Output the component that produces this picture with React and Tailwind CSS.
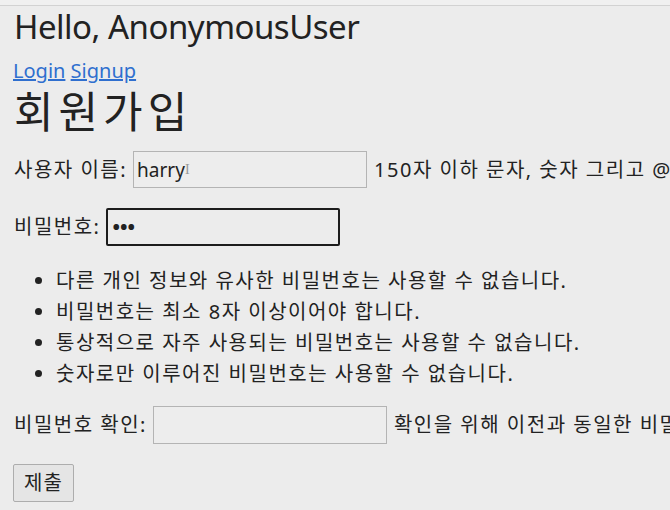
import React from 'react';

const font = { fontFamily: '"Noto Sans", "Noto Sans CJK KR", sans-serif' };

const rules = [
    '다른 개인 정보와 유사한 비밀번호는 사용할 수 없습니다.',
    '비밀번호는 최소 8자 이상이어야 합니다.',
    '통상적으로 자주 사용되는 비밀번호는 사용할 수 없습니다.',
    '숫자로만 이루어진 비밀번호는 사용할 수 없습니다.',
];

const App = () => {
    return (
        <div className="w-[670px] h-[510px] overflow-hidden bg-[#ececec] text-[#222] whitespace-nowrap font-['Noto_Sans','Noto_Sans_CJK_KR',sans-serif]">
            <div className="h-[6px] border-b border-[#d2d2d2] bg-[#f0f0f0]" />

            <h1 className="pl-[14px] text-[33px] leading-[42px] tracking-[-0.5px] font-normal">Hello, AnonymousUser</h1>

            <div className="mt-[11px] pl-[13px] text-[20px] leading-[24px] text-[#2f6fcf]">
                <a href="#" className="underline">Login</a>{' '}
                <a href="#" className="underline">Signup</a>
            </div>

            <h2 className="mt-[4px] pl-[14px] text-[43px] leading-[50px] tracking-[5px] font-normal">회원가입</h2>

            <form className="pl-[14px] text-[20px] tracking-[1.5px]">
                {/* 사용자 이름 */}
                <div className="mt-[14px] flex items-center h-[37px]">
                    <label>사용자 이름:</label>
                    <div className="relative ml-[6px]">
                        <input
                            readOnly
                            defaultValue="harry"
                            style={font}
                            className="w-[234px] h-[37px] border border-[#b4b4b4] bg-[#ededed] px-[3px] text-[19px] tracking-normal text-[#222] outline-none"
                        />
                        <span className="absolute left-[52px] top-[8px] text-[14px] tracking-normal text-[#999] font-['Liberation_Serif',serif]">I</span>
                    </div>
                    <span className="ml-[7px]">150자 이하 문자, 숫자 그리고 @/./+/-/_만 가능합니다.</span>
                </div>

                {/* 비밀번호 */}
                <div className="mt-[20px] flex items-center h-[37px]">
                    <label>비밀번호:</label>
                    <div className="ml-[6px] w-[234px] h-[38px] border-2 border-[#1c1c1c] rounded-[2px] bg-[#ececec] flex items-center px-[4px] text-[20px] font-bold tracking-[0px]">
                        •••
                    </div>
                </div>

                <ul className="mt-[20px] pl-[42px] list-disc leading-[31px]">
                    {rules.map((r) => (
                        <li key={r}>{r}</li>
                    ))}
                </ul>

                {/* 비밀번호 확인 */}
                <div className="mt-[17px] flex items-center h-[38px]">
                    <label>비밀번호 확인:</label>
                    <input
                        readOnly
                        style={font}
                        className="ml-[6px] w-[234px] h-[38px] border border-[#b4b4b4] bg-[#ededed] px-[4px] text-[19px] tracking-normal outline-none"
                    />
                    <span className="ml-[7px]">확인을 위해 이전과 동일한 비밀번호를 입력하세요.</span>
                </div>

                <button
                    type="button"
                    className="mt-[20px] w-[61px] h-[38px] border border-[#adadad] rounded-[2px] bg-[#e5e5e5] text-[20px] tracking-[1px] -ml-[1px]"
                >
                    제출
                </button>
            </form>
        </div>
    );
};

export default App;
